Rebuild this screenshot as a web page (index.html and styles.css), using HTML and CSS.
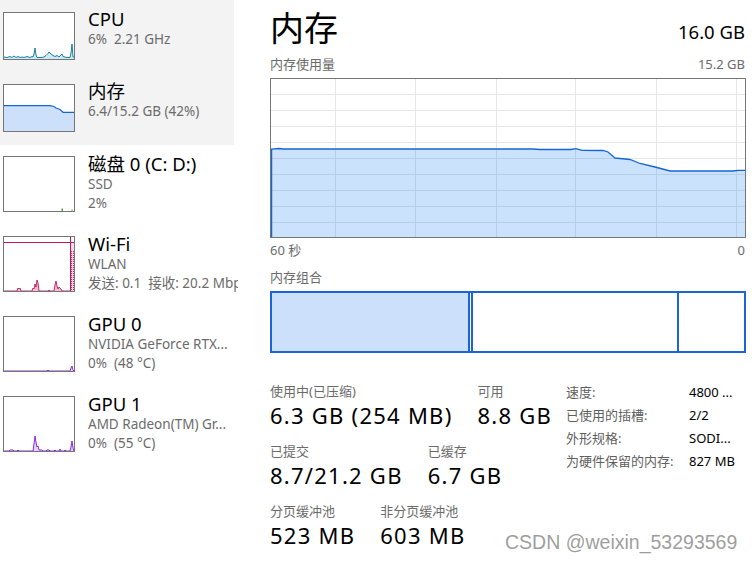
FILE: index.html
```html
<!DOCTYPE html>
<html lang="zh-CN">
<head>
<meta charset="utf-8">
<title>任务管理器 - 内存</title>
<link rel="stylesheet" href="styles.css">
</head>
<body>
<div class="app">
  <aside class="side">
    <div class="item sel short">
      <svg class="thumb small" viewBox="0 0 70 46" preserveAspectRatio="none">
        <polygon class="cpu-fill" points="0,46 0,44 3,44.5 6,43.5 8,44.5 10,43 12,44.5 14,43.5 16,44.5 18,44 20,44.5 23,43.5 26,44.5 28,43.5 29,44 30,41 31,35 32,42 33,44.5 37,44.5 40,44 42,42.5 44,40.5 45,39 47,41 49,42.5 51,43.5 53,42.5 55,44 56,43 58,41 59,43.5 61,44 63,44.5 66,44.5 67,40 68,31 69,44 70,44 70,46"/>
        <polyline class="cpu-line" points="0,44 3,44.5 6,43.5 8,44.5 10,43 12,44.5 14,43.5 16,44.5 18,44 20,44.5 23,43.5 26,44.5 28,43.5 29,44 30,41 31,35 32,42 33,44.5 37,44.5 40,44 42,42.5 44,40.5 45,39 47,41 49,42.5 51,43.5 53,42.5 55,44 56,43 58,41 59,43.5 61,44 63,44.5 66,44.5 67,40 68,31 69,44 70,44"/>
      </svg>
      <div class="txt">
        <div class="name">CPU</div>
        <div class="sub">6%&nbsp; 2.21 GHz</div>
      </div>
    </div>
    <div class="item sel short mem">
      <svg class="thumb small" viewBox="0 0 70 46" preserveAspectRatio="none">
        <polygon class="mem-fill" points="0,46 0,20.7 46,20.7 50,21.5 52,23 56,24.5 59,27.3 70,27.3 70,46"/>
        <polyline class="mem-line" points="0,20.7 46,20.7 50,21.5 52,23 56,24.5 59,27.3 70,27.3"/>
      </svg>
      <div class="txt">
        <div class="name">内存</div>
        <div class="sub">6.4/15.2 GB (42%)</div>
      </div>
    </div>
    <div class="item">
      <svg class="thumb" viewBox="0 0 70 54" preserveAspectRatio="none">
        <rect x="57.5" y="51.5" width="1.5" height="2.5" fill="#5a9e33"/>
        <rect x="67.5" y="52.5" width="1" height="1.5" fill="#5a9e33"/>
      </svg>
      <div class="txt">
        <div class="name">磁盘 0 (C: D:)</div>
        <div class="sub">SSD</div>
        <div class="sub">2%</div>
      </div>
    </div>
    <div class="item">
      <svg class="thumb" viewBox="0 0 70 54" preserveAspectRatio="none">
        <defs>
          <pattern id="dots" width="2" height="2" patternUnits="userSpaceOnUse">
            <rect width="2" height="2" fill="#f6d5e2"/>
            <rect x="1" y="0" width="1" height="1" fill="#c8306a"/>
          </pattern>
        </defs>
        <rect x="66" y="5" width="4" height="49" fill="#f8dbe6"/>
        <rect x="67" y="14" width="3" height="40" fill="url(#dots)"/>
        <polygon class="wifi-fill" points="0,54 13,54 14,51 15,52 16,51 17,54 28,54 29,51 30,52 31,47 32,50 33,43 34,46 35,54 44,54 45,53 46,54 50,54 51,48 52,44 53,49 54,52 55,50 57,52 58,54 66,54"/>
        <polyline class="wifi-line" points="0,54 13,54 14,51 15,52 16,51 17,54 28,54 29,51 30,52 31,47 32,50 33,43 34,46 35,54 44,54 45,53 46,54 50,54 51,48 52,44 53,49 54,52 55,50 57,52 58,54 66,54"/>
        <line x1="0" y1="5.5" x2="70" y2="5.5" class="wifi-stroke"/>
        <line x1="66.5" y1="0" x2="66.5" y2="54" class="wifi-stroke"/>
      </svg>
      <div class="txt">
        <div class="name">Wi-Fi</div>
        <div class="sub">WLAN</div>
        <div class="sub">发送: 0.1&nbsp; 接收: 20.2 Mbps</div>
      </div>
    </div>
    <div class="item">
      <svg class="thumb" viewBox="0 0 70 54" preserveAspectRatio="none">
        <polygon class="gpu-fill" points="0,54 43,54 44,53 45,54 66,54 67,51 68,49 69,53 70,54"/>
        <polyline class="gpu-line" points="0,54 43,54 44,53 45,54 66,54 67,51 68,49 69,53 70,54"/>
      </svg>
      <div class="txt">
        <div class="name">GPU 0</div>
        <div class="sub">NVIDIA GeForce RTX...</div>
        <div class="sub">0%&nbsp; (48 °C)</div>
      </div>
    </div>
    <div class="item">
      <svg class="thumb" viewBox="0 0 70 54" preserveAspectRatio="none">
        <polygon class="gpu-fill" points="0,54 5,54 6,53 9,53 10,54 13,54 14,53 15,54 29,54 30,47 31,39 32,45 33,50 34,49 35,53 38,53 39,54 42,54 43,53 45,53 46,54 50,54 51,53 52,54 55,54 56,52 57,54 60,54 61,53 62,54 66,54 67,50 68,44 69,51 70,54"/>
        <polyline class="gpu-line" points="0,54 5,54 6,53 9,53 10,54 13,54 14,53 15,54 29,54 30,47 31,39 32,45 33,50 34,49 35,53 38,53 39,54 42,54 43,53 45,53 46,54 50,54 51,53 52,54 55,54 56,52 57,54 60,54 61,53 62,54 66,54 67,50 68,44 69,51 70,54"/>
      </svg>
      <div class="txt">
        <div class="name">GPU 1</div>
        <div class="sub">AMD Radeon(TM) Gr...</div>
        <div class="sub">0%&nbsp; (55 °C)</div>
      </div>
    </div>
  </aside>

  <main class="main">
    <div class="head">
      <h1 class="title">内存</h1>
      <div class="total">16.0 GB</div>
    </div>
    <div class="caption">
      <span>内存使用量</span>
      <span>15.2 GB</span>
    </div>
    <svg class="graph" viewBox="0 0 474 158" preserveAspectRatio="none">
      <g class="grid">
        <line x1="0" y1="15.5" x2="474" y2="15.5"/>
        <line x1="0" y1="31.5" x2="474" y2="31.5"/>
        <line x1="0" y1="47.5" x2="474" y2="47.5"/>
        <line x1="0" y1="63.5" x2="474" y2="63.5"/>
        <line x1="0" y1="79.5" x2="474" y2="79.5"/>
        <line x1="0" y1="95.5" x2="474" y2="95.5"/>
        <line x1="0" y1="111.5" x2="474" y2="111.5"/>
        <line x1="0" y1="127.5" x2="474" y2="127.5"/>
        <line x1="0" y1="143.5" x2="474" y2="143.5"/>
        <line x1="64.5" y1="0" x2="64.5" y2="158"/>
        <line x1="144.5" y1="0" x2="144.5" y2="158"/>
        <line x1="225.5" y1="0" x2="225.5" y2="158"/>
        <line x1="304.5" y1="0" x2="304.5" y2="158"/>
        <line x1="385.5" y1="0" x2="385.5" y2="158"/>
        <line x1="465.5" y1="0" x2="465.5" y2="158"/>
      </g>
      <polygon class="g-fill" points="0,158 0,70 8,69.5 12,70 262,70 269,70.5 300,70.5 305,69.7 311,71.3 332,71.5 337,73 344,79 359,80.5 369,84.5 384,88 399,92 462,92 467,91.3 474,91.3 474,158"/>
      <polyline class="g-line" points="0.6,158 0.6,70 8,69.5 12,70 262,70 269,70.5 300,70.5 305,69.7 311,71.3 332,71.5 337,73 344,79 359,80.5 369,84.5 384,88 399,92 462,92 467,91.3 474,91.3"/>
    </svg>
    <div class="axis">
      <span>60 秒</span>
      <span>0</span>
    </div>
    <div class="caption comp-cap">内存组合</div>
    <div class="comp">
      <div class="seg used"></div>
      <div class="seg modified"></div>
      <div class="seg standby"></div>
      <div class="seg free"></div>
    </div>

    <div class="stats">
      <div class="blocks">
        <div class="row">
          <div class="cell"><div class="lbl">使用中(已压缩)</div><div class="val">6.3 GB (254 MB)</div></div>
          <div class="cell"><div class="lbl">可用</div><div class="val">8.8 GB</div></div>
        </div>
        <div class="row">
          <div class="cell"><div class="lbl">已提交</div><div class="val">8.7/21.2 GB</div></div>
          <div class="cell"><div class="lbl">已缓存</div><div class="val">6.7 GB</div></div>
        </div>
        <div class="row">
          <div class="cell"><div class="lbl">分页缓冲池</div><div class="val">523 MB</div></div>
          <div class="cell"><div class="lbl">非分页缓冲池</div><div class="val">603 MB</div></div>
        </div>
      </div>
      <dl class="props">
        <dt>速度:</dt><dd>4800 ...</dd>
        <dt>已使用的插槽:</dt><dd>2/2</dd>
        <dt>外形规格:</dt><dd>SODI...</dd>
        <dt>为硬件保留的内存:</dt><dd>827 MB</dd>
      </dl>
    </div>
  </main>
</div>
<div class="wm">CSDN @weixin_53293569</div>
</body>
</html>
```

FILE: styles.css
```css
* { box-sizing: border-box; }

html, body {
  margin: 0;
  padding: 0;
  background: #ffffff;
}

body {
  font-family: "Noto Sans", "Noto Sans CJK SC", sans-serif;
  color: #000;
  width: 752px;
  height: 562px;
  overflow: hidden;
  position: relative;
}

.app {
  display: flex;
  gap: 32px;
  height: 562px;
}

/* ---------- sidebar ---------- */
.side {
  width: 238px;
  flex: 0 0 238px;
  overflow: hidden;
  white-space: nowrap;
}

.item {
  width: 234px;
  height: 80px;
  display: flex;
  align-items: flex-start;
  gap: 13px;
  padding-left: 3px;
}

.item.short { height: 72px; }
.item.short.mem { height: 73px; }

.item.sel { background: #f3f3f3; }

.thumb {
  flex: 0 0 72px;
  width: 72px;
  height: 56px;
  margin-top: 11px;
  border: 1px solid #767676;
  background: #fff;
  display: block;
}

.thumb.small {
  height: 48px;
  margin-top: 12px;
}

.txt {
  padding-top: 7px;
}

.name {
  font-size: 18.5px;
  line-height: 23px;
  color: #000;
}

.sub {
  font-size: 13.5px;
  line-height: 19px;
  color: #6b6b6b;
}

.cpu-fill { fill: #cfe9f3; }
.cpu-line { fill: none; stroke: #1a7fa6; stroke-width: 1; }
.mem-fill { fill: #cce0fc; }
.mem-line { fill: none; stroke: #1565d8; stroke-width: 1.2; }
.wifi-fill { fill: #f3bdd1; }
.wifi-line { fill: none; stroke: #c2185b; stroke-width: 0.9; }
.wifi-stroke { stroke: #c2185b; stroke-width: 1; }
.gpu-fill { fill: #e3d1fb; }
.gpu-line { fill: none; stroke: #8b2be2; stroke-width: 1; }

/* ---------- main panel ---------- */
.main {
  width: 475px;
  padding-top: 8px;
}

.head {
  display: flex;
  justify-content: space-between;
  align-items: flex-start;
  height: 40px;
}

.title {
  margin: 0;
  font-size: 34px;
  line-height: 40px;
  font-weight: normal;
}

.total {
  margin-top: 12px;
  font-size: 18.5px;
  line-height: 24px;
}

.caption {
  display: flex;
  justify-content: space-between;
  margin-top: 8px;
  font-size: 13px;
  line-height: 17px;
  color: #6b6b6b;
}

.graph {
  display: block;
  margin-top: 5px;
  width: 476px;
  height: 160px;
  border: 1px solid #767676;
  background: #fff;
}

.grid line { stroke: #e6e6e6; stroke-width: 1; }
.g-fill { fill: rgba(17, 125, 247, 0.22); }
.g-line { fill: none; stroke: #1565d8; stroke-width: 1.3; }

.axis {
  display: flex;
  justify-content: space-between;
  margin-top: 4px;
  font-size: 13px;
  line-height: 17px;
  color: #6b6b6b;
}

.comp-cap { margin-top: 10px; }

.comp {
  display: flex;
  margin-top: 5px;
  width: 476px;
  height: 62px;
  border: 2px solid #1a64d6;
}

.seg { height: 100%; }
.seg.used {
  flex: 0 0 198px;
  background: #cce0fc;
  border-right: 2px solid #1a64d6;
}
.seg.modified {
  flex: 0 0 3px;
  border-right: 2px solid #1a64d6;
}
.seg.standby {
  flex: 0 0 206px;
  border-right: 2px solid #1a64d6;
}
.seg.free { flex: 1 1 auto; }

/* ---------- stats ---------- */
.stats {
  display: flex;
  margin-top: 30px;
}

.blocks {
  flex: 0 0 296px;
  display: flex;
  flex-direction: column;
  gap: 13px;
}

.row {
  display: flex;
  gap: 25px;
}

.lbl {
  font-size: 13px;
  line-height: 17px;
  color: #6b6b6b;
}

.val {
  font-size: 22px;
  line-height: 30px;
  letter-spacing: 1.25px;
  white-space: nowrap;
}

.props {
  margin: -2px 0 0 0;
  display: grid;
  grid-template-columns: 123px auto;
  grid-auto-rows: 23px;
  font-size: 13px;
  line-height: 23px;
  align-content: start;
}

.props dt { color: #5f5f5f; }
.props dd { margin: 0; color: #000; white-space: nowrap; }

/* ---------- watermark overlay ---------- */
.wm {
  position: absolute;
  left: 505px;
  top: 530px;
  font-family: "Liberation Sans", Arial, sans-serif;
  font-size: 19.5px;
  line-height: 24px;
  color: rgba(140, 140, 140, 0.85);
  white-space: nowrap;
}
```
